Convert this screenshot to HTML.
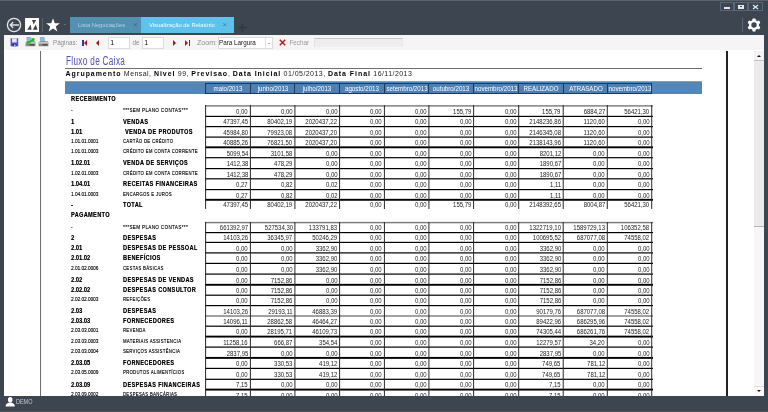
<!DOCTYPE html>
<html><head><meta charset="utf-8"><style>
*{margin:0;padding:0;box-sizing:border-box}
html,body{width:768px;height:412px;overflow:hidden}
body{position:relative;background:#3d4551;font-family:"Liberation Sans",sans-serif}
.a{position:absolute}
.t{position:absolute;line-height:0;white-space:nowrap;color:#1a1a1a}
.b{font-weight:bold;color:#000;text-shadow:0.25px 0 0 rgba(0,0,0,0.6)}
.s{color:#000;text-shadow:0.25px 0 0 rgba(0,0,0,0.6)}
.n{color:#222}
.ag{letter-spacing:0.45px;color:#151515}
.ag b{letter-spacing:0.95px;color:#000}
.hl{position:absolute;left:205px;width:448px;height:1px;background:#111}
.hl0{position:absolute;left:205px;width:448px;height:1px;background:#8a8a8a}
.vl{position:absolute;width:1px;background:#2a2a2a}
.hd{position:absolute;top:83px;height:11px;border:1px solid #203a55;background:#4e80b3}
</style></head><body>
<div id="w" style="position:absolute;left:0;top:0;width:768px;height:412px;overflow:hidden;will-change:transform;background:#3d4551">

<div class="a" style="left:0;top:0;width:768px;height:1px;background:#5d6168"></div>
<div class="a" style="left:4px;top:35px;width:760px;height:15px;background:#f5f5f5"></div>
<div class="a" style="left:4px;top:50px;width:760px;height:346px;background:#fff"></div>
<div class="a" style="left:40px;top:51px;width:1px;height:345px;background:#6e6e6e"></div>
<div class="a" style="left:726px;top:51px;width:2px;height:345px;background:#222"></div>
<div class="a" style="left:754px;top:51px;width:10px;height:345px;background:#f7f7f7"></div>
<div class="a" style="left:754px;top:61px;width:10px;height:166px;background:#ebebeb;border-bottom:1px solid #b4b4b4"></div>
<div class="t " style="top:60.94px;font-size:12px;color:#4d4dbb;left:66.20px;transform:scaleX(0.68);transform-origin:0 0;letter-spacing:0.5px;">Fluxo de Caixa</div>
<div class="a" style="left:65px;top:68px;width:637px;height:1px;background:#6f6f6f"></div>
<div class="t ag" style="top:74.17px;font-size:7px;color:#222;left:65.50px;"><b>Agrupamento</b> Mensal, <b>Nivel</b> 99, <b>Previsao</b>, <b>Data Inicial</b> 01/05/2013, <b>Data Final</b> 16/11/2013</div>
<div class="a" style="left:65px;top:81px;width:637px;height:1px;background:#9a9a9a"></div>
<div class="a" style="left:65px;top:82px;width:637px;height:12px;background:#5187b9"></div>
<div class="hd" style="left:205px;width:46px;overflow:hidden"><div class="t" style="left:22.00px;top:4.75px;font-size:6.5px;color:#fff;transform:translateX(-50%) scaleX(0.95)">maio/2013</div></div>
<div class="hd" style="left:250px;width:45px;overflow:hidden"><div class="t" style="left:21.50px;top:4.75px;font-size:6.5px;color:#fff;transform:translateX(-50%) scaleX(0.95)">junho/2013</div></div>
<div class="hd" style="left:294px;width:46px;overflow:hidden"><div class="t" style="left:22.00px;top:4.75px;font-size:6.5px;color:#fff;transform:translateX(-50%) scaleX(0.95)">julho/2013</div></div>
<div class="hd" style="left:339px;width:46px;overflow:hidden"><div class="t" style="left:22.00px;top:4.75px;font-size:6.5px;color:#fff;transform:translateX(-50%) scaleX(0.95)">agosto/2013</div></div>
<div class="hd" style="left:384px;width:45px;overflow:hidden"><div class="t" style="left:21.50px;top:4.75px;font-size:6.5px;color:#fff;transform:translateX(-50%) scaleX(0.95)">setembro/2013</div></div>
<div class="hd" style="left:428px;width:46px;overflow:hidden"><div class="t" style="left:22.00px;top:4.75px;font-size:6.5px;color:#fff;transform:translateX(-50%) scaleX(0.95)">outubro/2013</div></div>
<div class="hd" style="left:473px;width:46px;overflow:hidden"><div class="t" style="left:22.00px;top:4.75px;font-size:6.5px;color:#fff;transform:translateX(-50%) scaleX(0.95)">novembro/2013</div></div>
<div class="hd" style="left:518px;width:46px;overflow:hidden"><div class="t" style="left:22.00px;top:4.75px;font-size:6.5px;color:#fff;transform:translateX(-50%) scaleX(0.95)">REALIZADO</div></div>
<div class="hd" style="left:563px;width:45px;overflow:hidden"><div class="t" style="left:21.50px;top:4.75px;font-size:6.5px;color:#fff;transform:translateX(-50%) scaleX(0.95)">ATRASADO</div></div>
<div class="hd" style="left:607px;width:45px;overflow:hidden"><div class="t" style="left:21.50px;top:4.75px;font-size:6.5px;color:#fff;transform:translateX(-50%) scaleX(0.95)">novembro/2013</div></div>
<div class="t b" style="top:98.61px;font-size:6.9px;left:71.00px;transform:scaleX(0.8);transform-origin:0 0;letter-spacing:0.5px;">RECEBIMENTO</div>
<div class="a" style="left:205px;top:105px;width:448px;height:1px;background:rgba(120,120,120,0.80)"></div>
<div class="a" style="left:205px;top:106px;width:448px;height:1px;background:rgba(120,120,120,0.60)"></div>
<div class="a" style="left:205px;top:115px;width:448px;height:1px;background:rgba(0,0,0,0.20)"></div>
<div class="a" style="left:205px;top:116px;width:448px;height:1px;background:rgba(0,0,0,1.00)"></div>
<div class="a" style="left:205px;top:126px;width:448px;height:1px;background:rgba(0,0,0,1.00)"></div>
<div class="a" style="left:205px;top:127px;width:448px;height:1px;background:rgba(0,0,0,0.20)"></div>
<div class="a" style="left:205px;top:136px;width:448px;height:1px;background:rgba(0,0,0,0.50)"></div>
<div class="a" style="left:205px;top:137px;width:448px;height:1px;background:rgba(0,0,0,0.70)"></div>
<div class="a" style="left:205px;top:146px;width:448px;height:1px;background:rgba(0,0,0,0.65)"></div>
<div class="a" style="left:205px;top:147px;width:448px;height:1px;background:rgba(0,0,0,1.00)"></div>
<div class="a" style="left:205px;top:148px;width:448px;height:1px;background:rgba(0,0,0,0.25)"></div>
<div class="a" style="left:205px;top:157px;width:448px;height:1px;background:rgba(0,0,0,0.90)"></div>
<div class="a" style="left:205px;top:158px;width:448px;height:1px;background:rgba(0,0,0,0.30)"></div>
<div class="a" style="left:205px;top:168px;width:448px;height:1px;background:rgba(0,0,0,1.00)"></div>
<div class="a" style="left:205px;top:169px;width:448px;height:1px;background:rgba(0,0,0,0.20)"></div>
<div class="a" style="left:205px;top:178px;width:448px;height:1px;background:rgba(0,0,0,0.80)"></div>
<div class="a" style="left:205px;top:179px;width:448px;height:1px;background:rgba(0,0,0,0.40)"></div>
<div class="a" style="left:205px;top:189px;width:448px;height:1px;background:rgba(0,0,0,1.00)"></div>
<div class="a" style="left:205px;top:190px;width:448px;height:1px;background:rgba(0,0,0,0.20)"></div>
<div class="a" style="left:205px;top:198px;width:448px;height:1px;background:rgba(0,0,0,0.15)"></div>
<div class="a" style="left:205px;top:199px;width:448px;height:1px;background:rgba(0,0,0,1.00)"></div>
<div class="a" style="left:205px;top:200px;width:448px;height:1px;background:rgba(0,0,0,0.75)"></div>
<div class="a" style="left:205px;top:105px;width:1px;height:104px;background:rgba(40,40,40,0.90)"></div>
<div class="a" style="left:206px;top:105px;width:1px;height:104px;background:rgba(40,40,40,0.10)"></div>
<div class="a" style="left:249px;top:105px;width:1px;height:104px;background:rgba(40,40,40,0.10)"></div>
<div class="a" style="left:250px;top:105px;width:1px;height:104px;background:rgba(40,40,40,0.90)"></div>
<div class="a" style="left:294px;top:105px;width:1px;height:104px;background:rgba(40,40,40,0.60)"></div>
<div class="a" style="left:295px;top:105px;width:1px;height:104px;background:rgba(40,40,40,0.40)"></div>
<div class="a" style="left:339px;top:105px;width:1px;height:104px;background:rgba(40,40,40,0.90)"></div>
<div class="a" style="left:340px;top:105px;width:1px;height:104px;background:rgba(40,40,40,0.10)"></div>
<div class="a" style="left:383px;top:105px;width:1px;height:104px;background:rgba(40,40,40,0.10)"></div>
<div class="a" style="left:384px;top:105px;width:1px;height:104px;background:rgba(40,40,40,0.90)"></div>
<div class="a" style="left:428px;top:105px;width:1px;height:104px;background:rgba(40,40,40,0.60)"></div>
<div class="a" style="left:429px;top:105px;width:1px;height:104px;background:rgba(40,40,40,0.40)"></div>
<div class="a" style="left:473px;top:105px;width:1px;height:104px;background:rgba(40,40,40,0.90)"></div>
<div class="a" style="left:474px;top:105px;width:1px;height:104px;background:rgba(40,40,40,0.10)"></div>
<div class="a" style="left:518px;top:105px;width:1px;height:104px;background:rgba(40,40,40,0.80)"></div>
<div class="a" style="left:519px;top:105px;width:1px;height:104px;background:rgba(40,40,40,0.20)"></div>
<div class="a" style="left:562px;top:105px;width:1px;height:104px;background:rgba(40,40,40,0.30)"></div>
<div class="a" style="left:563px;top:105px;width:1px;height:104px;background:rgba(40,40,40,0.70)"></div>
<div class="a" style="left:606px;top:105px;width:1px;height:104px;background:rgba(40,40,40,0.20)"></div>
<div class="a" style="left:607px;top:105px;width:1px;height:104px;background:rgba(40,40,40,0.80)"></div>
<div class="a" style="left:651px;top:105px;width:1px;height:104px;background:rgba(40,40,40,0.80)"></div>
<div class="a" style="left:652px;top:105px;width:1px;height:104px;background:rgba(40,40,40,0.20)"></div>
<div class="t s" style="top:109.92px;font-size:6.0px;left:71.00px;transform:scaleX(0.78);transform-origin:0 0;">-</div>
<div class="t s" style="top:109.99px;font-size:5.8px;left:123.10px;transform:scaleX(0.7776000000000001);transform-origin:0 0;letter-spacing:0.5px;">***SEM PLANO CONTAS***</div>
<div class="t n" style="top:111.57px;font-size:7.0px;right:519.90px;transform:scaleX(0.855);transform-origin:100% 0;">0,00</div>
<div class="t n" style="top:111.57px;font-size:7.0px;right:475.40px;transform:scaleX(0.855);transform-origin:100% 0;">0,00</div>
<div class="t n" style="top:111.57px;font-size:7.0px;right:430.70px;transform:scaleX(0.855);transform-origin:100% 0;">0,00</div>
<div class="t n" style="top:111.57px;font-size:7.0px;right:385.90px;transform:scaleX(0.855);transform-origin:100% 0;">0,00</div>
<div class="t n" style="top:111.57px;font-size:7.0px;right:341.40px;transform:scaleX(0.855);transform-origin:100% 0;">0,00</div>
<div class="t n" style="top:111.57px;font-size:7.0px;right:296.70px;transform:scaleX(0.855);transform-origin:100% 0;">155,79</div>
<div class="t n" style="top:111.57px;font-size:7.0px;right:251.60px;transform:scaleX(0.855);transform-origin:100% 0;">0,00</div>
<div class="t n" style="top:111.57px;font-size:7.0px;right:207.10px;transform:scaleX(0.855);transform-origin:100% 0;">155,79</div>
<div class="t n" style="top:111.57px;font-size:7.0px;right:163.00px;transform:scaleX(0.855);transform-origin:100% 0;">6884,27</div>
<div class="t n" style="top:111.57px;font-size:7.0px;right:118.60px;transform:scaleX(0.855);transform-origin:100% 0;">56421,30</div>
<div class="t b" style="top:121.61px;font-size:6.9px;left:71.00px;transform:scaleX(0.83);transform-origin:0 0;">1</div>
<div class="t b" style="top:121.61px;font-size:6.9px;left:123.10px;transform:scaleX(0.8);transform-origin:0 0;letter-spacing:0.5px;">VENDAS</div>
<div class="t n" style="top:121.57px;font-size:7.0px;right:519.90px;transform:scaleX(0.855);transform-origin:100% 0;">47397,45</div>
<div class="t n" style="top:121.57px;font-size:7.0px;right:475.40px;transform:scaleX(0.855);transform-origin:100% 0;">80402,19</div>
<div class="t n" style="top:121.57px;font-size:7.0px;right:430.70px;transform:scaleX(0.855);transform-origin:100% 0;">2020437,22</div>
<div class="t n" style="top:121.57px;font-size:7.0px;right:385.90px;transform:scaleX(0.855);transform-origin:100% 0;">0,00</div>
<div class="t n" style="top:121.57px;font-size:7.0px;right:341.40px;transform:scaleX(0.855);transform-origin:100% 0;">0,00</div>
<div class="t n" style="top:121.57px;font-size:7.0px;right:296.70px;transform:scaleX(0.855);transform-origin:100% 0;">0,00</div>
<div class="t n" style="top:121.57px;font-size:7.0px;right:251.60px;transform:scaleX(0.855);transform-origin:100% 0;">0,00</div>
<div class="t n" style="top:121.57px;font-size:7.0px;right:207.10px;transform:scaleX(0.855);transform-origin:100% 0;">2148236,86</div>
<div class="t n" style="top:121.57px;font-size:7.0px;right:163.00px;transform:scaleX(0.855);transform-origin:100% 0;">1120,60</div>
<div class="t n" style="top:121.57px;font-size:7.0px;right:118.60px;transform:scaleX(0.855);transform-origin:100% 0;">0,00</div>
<div class="t b" style="top:131.61px;font-size:6.9px;left:71.00px;transform:scaleX(0.83);transform-origin:0 0;">1.01</div>
<div class="t b" style="top:131.61px;font-size:6.9px;left:124.80px;transform:scaleX(0.8);transform-origin:0 0;letter-spacing:0.5px;">VENDA DE PRODUTOS</div>
<div class="t n" style="top:132.57px;font-size:7.0px;right:519.90px;transform:scaleX(0.855);transform-origin:100% 0;">45984,80</div>
<div class="t n" style="top:132.57px;font-size:7.0px;right:475.40px;transform:scaleX(0.855);transform-origin:100% 0;">79923,08</div>
<div class="t n" style="top:132.57px;font-size:7.0px;right:430.70px;transform:scaleX(0.855);transform-origin:100% 0;">2020437,20</div>
<div class="t n" style="top:132.57px;font-size:7.0px;right:385.90px;transform:scaleX(0.855);transform-origin:100% 0;">0,00</div>
<div class="t n" style="top:132.57px;font-size:7.0px;right:341.40px;transform:scaleX(0.855);transform-origin:100% 0;">0,00</div>
<div class="t n" style="top:132.57px;font-size:7.0px;right:296.70px;transform:scaleX(0.855);transform-origin:100% 0;">0,00</div>
<div class="t n" style="top:132.57px;font-size:7.0px;right:251.60px;transform:scaleX(0.855);transform-origin:100% 0;">0,00</div>
<div class="t n" style="top:132.57px;font-size:7.0px;right:207.10px;transform:scaleX(0.855);transform-origin:100% 0;">2146345,08</div>
<div class="t n" style="top:132.57px;font-size:7.0px;right:163.00px;transform:scaleX(0.855);transform-origin:100% 0;">1120,60</div>
<div class="t n" style="top:132.57px;font-size:7.0px;right:118.60px;transform:scaleX(0.855);transform-origin:100% 0;">0,00</div>
<div class="t s" style="top:140.92px;font-size:6.0px;left:71.00px;transform:scaleX(0.78);transform-origin:0 0;">1.01.01.0001</div>
<div class="t s" style="top:140.99px;font-size:5.8px;left:123.10px;transform:scaleX(0.72);transform-origin:0 0;letter-spacing:0.5px;">CARTÃO DE CRÉDITO</div>
<div class="t n" style="top:142.57px;font-size:7.0px;right:519.90px;transform:scaleX(0.855);transform-origin:100% 0;">40885,26</div>
<div class="t n" style="top:142.57px;font-size:7.0px;right:475.40px;transform:scaleX(0.855);transform-origin:100% 0;">76821,50</div>
<div class="t n" style="top:142.57px;font-size:7.0px;right:430.70px;transform:scaleX(0.855);transform-origin:100% 0;">2020437,20</div>
<div class="t n" style="top:142.57px;font-size:7.0px;right:385.90px;transform:scaleX(0.855);transform-origin:100% 0;">0,00</div>
<div class="t n" style="top:142.57px;font-size:7.0px;right:341.40px;transform:scaleX(0.855);transform-origin:100% 0;">0,00</div>
<div class="t n" style="top:142.57px;font-size:7.0px;right:296.70px;transform:scaleX(0.855);transform-origin:100% 0;">0,00</div>
<div class="t n" style="top:142.57px;font-size:7.0px;right:251.60px;transform:scaleX(0.855);transform-origin:100% 0;">0,00</div>
<div class="t n" style="top:142.57px;font-size:7.0px;right:207.10px;transform:scaleX(0.855);transform-origin:100% 0;">2138143,96</div>
<div class="t n" style="top:142.57px;font-size:7.0px;right:163.00px;transform:scaleX(0.855);transform-origin:100% 0;">1120,60</div>
<div class="t n" style="top:142.57px;font-size:7.0px;right:118.60px;transform:scaleX(0.855);transform-origin:100% 0;">0,00</div>
<div class="t s" style="top:150.92px;font-size:6.0px;left:71.00px;transform:scaleX(0.78);transform-origin:0 0;">1.01.01.0003</div>
<div class="t s" style="top:150.99px;font-size:5.8px;left:123.10px;transform:scaleX(0.72);transform-origin:0 0;letter-spacing:0.5px;">CRÉDITO EM CONTA CORRENTE</div>
<div class="t n" style="top:153.57px;font-size:7.0px;right:519.90px;transform:scaleX(0.855);transform-origin:100% 0;">5099,54</div>
<div class="t n" style="top:153.57px;font-size:7.0px;right:475.40px;transform:scaleX(0.855);transform-origin:100% 0;">3101,58</div>
<div class="t n" style="top:153.57px;font-size:7.0px;right:430.70px;transform:scaleX(0.855);transform-origin:100% 0;">0,00</div>
<div class="t n" style="top:153.57px;font-size:7.0px;right:385.90px;transform:scaleX(0.855);transform-origin:100% 0;">0,00</div>
<div class="t n" style="top:153.57px;font-size:7.0px;right:341.40px;transform:scaleX(0.855);transform-origin:100% 0;">0,00</div>
<div class="t n" style="top:153.57px;font-size:7.0px;right:296.70px;transform:scaleX(0.855);transform-origin:100% 0;">0,00</div>
<div class="t n" style="top:153.57px;font-size:7.0px;right:251.60px;transform:scaleX(0.855);transform-origin:100% 0;">0,00</div>
<div class="t n" style="top:153.57px;font-size:7.0px;right:207.10px;transform:scaleX(0.855);transform-origin:100% 0;">8201,12</div>
<div class="t n" style="top:153.57px;font-size:7.0px;right:163.00px;transform:scaleX(0.855);transform-origin:100% 0;">0,00</div>
<div class="t n" style="top:153.57px;font-size:7.0px;right:118.60px;transform:scaleX(0.855);transform-origin:100% 0;">0,00</div>
<div class="t b" style="top:162.61px;font-size:6.9px;left:71.00px;transform:scaleX(0.83);transform-origin:0 0;">1.02.01</div>
<div class="t b" style="top:162.61px;font-size:6.9px;left:123.10px;transform:scaleX(0.8);transform-origin:0 0;letter-spacing:0.5px;">VENDA DE SERVIÇOS</div>
<div class="t n" style="top:163.57px;font-size:7.0px;right:519.90px;transform:scaleX(0.855);transform-origin:100% 0;">1412,38</div>
<div class="t n" style="top:163.57px;font-size:7.0px;right:475.40px;transform:scaleX(0.855);transform-origin:100% 0;">478,29</div>
<div class="t n" style="top:163.57px;font-size:7.0px;right:430.70px;transform:scaleX(0.855);transform-origin:100% 0;">0,00</div>
<div class="t n" style="top:163.57px;font-size:7.0px;right:385.90px;transform:scaleX(0.855);transform-origin:100% 0;">0,00</div>
<div class="t n" style="top:163.57px;font-size:7.0px;right:341.40px;transform:scaleX(0.855);transform-origin:100% 0;">0,00</div>
<div class="t n" style="top:163.57px;font-size:7.0px;right:296.70px;transform:scaleX(0.855);transform-origin:100% 0;">0,00</div>
<div class="t n" style="top:163.57px;font-size:7.0px;right:251.60px;transform:scaleX(0.855);transform-origin:100% 0;">0,00</div>
<div class="t n" style="top:163.57px;font-size:7.0px;right:207.10px;transform:scaleX(0.855);transform-origin:100% 0;">1890,67</div>
<div class="t n" style="top:163.57px;font-size:7.0px;right:163.00px;transform:scaleX(0.855);transform-origin:100% 0;">0,00</div>
<div class="t n" style="top:163.57px;font-size:7.0px;right:118.60px;transform:scaleX(0.855);transform-origin:100% 0;">0,00</div>
<div class="t s" style="top:172.92px;font-size:6.0px;left:71.00px;transform:scaleX(0.78);transform-origin:0 0;">1.02.01.0003</div>
<div class="t s" style="top:172.99px;font-size:5.8px;left:123.10px;transform:scaleX(0.72);transform-origin:0 0;letter-spacing:0.5px;">CRÉDITO EM CONTA CORRENTE</div>
<div class="t n" style="top:174.57px;font-size:7.0px;right:519.90px;transform:scaleX(0.855);transform-origin:100% 0;">1412,38</div>
<div class="t n" style="top:174.57px;font-size:7.0px;right:475.40px;transform:scaleX(0.855);transform-origin:100% 0;">478,29</div>
<div class="t n" style="top:174.57px;font-size:7.0px;right:430.70px;transform:scaleX(0.855);transform-origin:100% 0;">0,00</div>
<div class="t n" style="top:174.57px;font-size:7.0px;right:385.90px;transform:scaleX(0.855);transform-origin:100% 0;">0,00</div>
<div class="t n" style="top:174.57px;font-size:7.0px;right:341.40px;transform:scaleX(0.855);transform-origin:100% 0;">0,00</div>
<div class="t n" style="top:174.57px;font-size:7.0px;right:296.70px;transform:scaleX(0.855);transform-origin:100% 0;">0,00</div>
<div class="t n" style="top:174.57px;font-size:7.0px;right:251.60px;transform:scaleX(0.855);transform-origin:100% 0;">0,00</div>
<div class="t n" style="top:174.57px;font-size:7.0px;right:207.10px;transform:scaleX(0.855);transform-origin:100% 0;">1890,67</div>
<div class="t n" style="top:174.57px;font-size:7.0px;right:163.00px;transform:scaleX(0.855);transform-origin:100% 0;">0,00</div>
<div class="t n" style="top:174.57px;font-size:7.0px;right:118.60px;transform:scaleX(0.855);transform-origin:100% 0;">0,00</div>
<div class="t b" style="top:183.61px;font-size:6.9px;left:71.00px;transform:scaleX(0.83);transform-origin:0 0;">1.04.01</div>
<div class="t b" style="top:183.61px;font-size:6.9px;left:123.10px;transform:scaleX(0.8);transform-origin:0 0;letter-spacing:0.5px;">RECEITAS FINANCEIRAS</div>
<div class="t n" style="top:184.57px;font-size:7.0px;right:519.90px;transform:scaleX(0.855);transform-origin:100% 0;">0,27</div>
<div class="t n" style="top:184.57px;font-size:7.0px;right:475.40px;transform:scaleX(0.855);transform-origin:100% 0;">0,82</div>
<div class="t n" style="top:184.57px;font-size:7.0px;right:430.70px;transform:scaleX(0.855);transform-origin:100% 0;">0,02</div>
<div class="t n" style="top:184.57px;font-size:7.0px;right:385.90px;transform:scaleX(0.855);transform-origin:100% 0;">0,00</div>
<div class="t n" style="top:184.57px;font-size:7.0px;right:341.40px;transform:scaleX(0.855);transform-origin:100% 0;">0,00</div>
<div class="t n" style="top:184.57px;font-size:7.0px;right:296.70px;transform:scaleX(0.855);transform-origin:100% 0;">0,00</div>
<div class="t n" style="top:184.57px;font-size:7.0px;right:251.60px;transform:scaleX(0.855);transform-origin:100% 0;">0,00</div>
<div class="t n" style="top:184.57px;font-size:7.0px;right:207.10px;transform:scaleX(0.855);transform-origin:100% 0;">1,11</div>
<div class="t n" style="top:184.57px;font-size:7.0px;right:163.00px;transform:scaleX(0.855);transform-origin:100% 0;">0,00</div>
<div class="t n" style="top:184.57px;font-size:7.0px;right:118.60px;transform:scaleX(0.855);transform-origin:100% 0;">0,00</div>
<div class="t s" style="top:193.92px;font-size:6.0px;left:71.00px;transform:scaleX(0.78);transform-origin:0 0;">1.04.01.0003</div>
<div class="t s" style="top:193.99px;font-size:5.8px;left:123.10px;transform:scaleX(0.72);transform-origin:0 0;letter-spacing:0.5px;">ENCARGOS E JUROS</div>
<div class="t n" style="top:195.57px;font-size:7.0px;right:519.90px;transform:scaleX(0.855);transform-origin:100% 0;">0,27</div>
<div class="t n" style="top:195.57px;font-size:7.0px;right:475.40px;transform:scaleX(0.855);transform-origin:100% 0;">0,82</div>
<div class="t n" style="top:195.57px;font-size:7.0px;right:430.70px;transform:scaleX(0.855);transform-origin:100% 0;">0,02</div>
<div class="t n" style="top:195.57px;font-size:7.0px;right:385.90px;transform:scaleX(0.855);transform-origin:100% 0;">0,00</div>
<div class="t n" style="top:195.57px;font-size:7.0px;right:341.40px;transform:scaleX(0.855);transform-origin:100% 0;">0,00</div>
<div class="t n" style="top:195.57px;font-size:7.0px;right:296.70px;transform:scaleX(0.855);transform-origin:100% 0;">0,00</div>
<div class="t n" style="top:195.57px;font-size:7.0px;right:251.60px;transform:scaleX(0.855);transform-origin:100% 0;">0,00</div>
<div class="t n" style="top:195.57px;font-size:7.0px;right:207.10px;transform:scaleX(0.855);transform-origin:100% 0;">1,11</div>
<div class="t n" style="top:195.57px;font-size:7.0px;right:163.00px;transform:scaleX(0.855);transform-origin:100% 0;">0,00</div>
<div class="t n" style="top:195.57px;font-size:7.0px;right:118.60px;transform:scaleX(0.855);transform-origin:100% 0;">0,00</div>
<div class="t b" style="top:204.61px;font-size:6.9px;left:71.00px;transform:scaleX(0.83);transform-origin:0 0;">-</div>
<div class="t b" style="top:204.61px;font-size:6.9px;left:123.10px;transform:scaleX(0.8);transform-origin:0 0;letter-spacing:0.5px;">TOTAL</div>
<div class="t n" style="top:204.57px;font-size:7.0px;right:519.90px;transform:scaleX(0.855);transform-origin:100% 0;">47397,45</div>
<div class="t n" style="top:204.57px;font-size:7.0px;right:475.40px;transform:scaleX(0.855);transform-origin:100% 0;">80402,19</div>
<div class="t n" style="top:204.57px;font-size:7.0px;right:430.70px;transform:scaleX(0.855);transform-origin:100% 0;">2020437,22</div>
<div class="t n" style="top:204.57px;font-size:7.0px;right:385.90px;transform:scaleX(0.855);transform-origin:100% 0;">0,00</div>
<div class="t n" style="top:204.57px;font-size:7.0px;right:341.40px;transform:scaleX(0.855);transform-origin:100% 0;">0,00</div>
<div class="t n" style="top:204.57px;font-size:7.0px;right:296.70px;transform:scaleX(0.855);transform-origin:100% 0;">155,79</div>
<div class="t n" style="top:204.57px;font-size:7.0px;right:251.60px;transform:scaleX(0.855);transform-origin:100% 0;">0,00</div>
<div class="t n" style="top:204.57px;font-size:7.0px;right:207.10px;transform:scaleX(0.855);transform-origin:100% 0;">2148392,65</div>
<div class="t n" style="top:204.57px;font-size:7.0px;right:163.00px;transform:scaleX(0.855);transform-origin:100% 0;">8004,87</div>
<div class="t n" style="top:204.57px;font-size:7.0px;right:118.60px;transform:scaleX(0.855);transform-origin:100% 0;">56421,30</div>
<div class="t b" style="top:214.61px;font-size:6.9px;left:71.00px;transform:scaleX(0.8);transform-origin:0 0;letter-spacing:0.5px;">PAGAMENTO</div>
<div class="a" style="left:205px;top:221px;width:448px;height:1px;background:rgba(120,120,120,0.10)"></div>
<div class="a" style="left:205px;top:222px;width:448px;height:1px;background:rgba(120,120,120,1.00)"></div>
<div class="a" style="left:205px;top:223px;width:448px;height:1px;background:rgba(120,120,120,0.30)"></div>
<div class="a" style="left:205px;top:232px;width:448px;height:1px;background:rgba(0,0,0,1.00)"></div>
<div class="a" style="left:205px;top:233px;width:448px;height:1px;background:rgba(0,0,0,0.20)"></div>
<div class="a" style="left:205px;top:241px;width:448px;height:1px;background:rgba(0,0,0,0.20)"></div>
<div class="a" style="left:205px;top:242px;width:448px;height:1px;background:rgba(0,0,0,1.00)"></div>
<div class="a" style="left:205px;top:252px;width:448px;height:1px;background:rgba(0,0,0,0.70)"></div>
<div class="a" style="left:205px;top:253px;width:448px;height:1px;background:rgba(0,0,0,0.50)"></div>
<div class="a" style="left:205px;top:262px;width:448px;height:1px;background:rgba(0,0,0,0.20)"></div>
<div class="a" style="left:205px;top:263px;width:448px;height:1px;background:rgba(0,0,0,1.00)"></div>
<div class="a" style="left:205px;top:273px;width:448px;height:1px;background:rgba(0,0,0,0.50)"></div>
<div class="a" style="left:205px;top:274px;width:448px;height:1px;background:rgba(0,0,0,0.70)"></div>
<div class="a" style="left:205px;top:283px;width:448px;height:1px;background:rgba(0,0,0,0.15)"></div>
<div class="a" style="left:205px;top:284px;width:448px;height:1px;background:rgba(0,0,0,1.00)"></div>
<div class="a" style="left:205px;top:285px;width:448px;height:1px;background:rgba(0,0,0,0.75)"></div>
<div class="a" style="left:205px;top:294px;width:448px;height:1px;background:rgba(0,0,0,0.40)"></div>
<div class="a" style="left:205px;top:295px;width:448px;height:1px;background:rgba(0,0,0,0.80)"></div>
<div class="a" style="left:205px;top:305px;width:448px;height:1px;background:rgba(0,0,0,1.00)"></div>
<div class="a" style="left:205px;top:306px;width:448px;height:1px;background:rgba(0,0,0,0.20)"></div>
<div class="a" style="left:205px;top:315px;width:448px;height:1px;background:rgba(110,110,110,0.65)"></div>
<div class="a" style="left:205px;top:316px;width:448px;height:1px;background:rgba(110,110,110,0.65)"></div>
<div class="a" style="left:205px;top:325px;width:448px;height:1px;background:rgba(0,0,0,0.40)"></div>
<div class="a" style="left:205px;top:326px;width:448px;height:1px;background:rgba(0,0,0,0.80)"></div>
<div class="a" style="left:205px;top:335px;width:448px;height:1px;background:rgba(0,0,0,0.35)"></div>
<div class="a" style="left:205px;top:336px;width:448px;height:1px;background:rgba(0,0,0,1.00)"></div>
<div class="a" style="left:205px;top:337px;width:448px;height:1px;background:rgba(0,0,0,0.55)"></div>
<div class="a" style="left:205px;top:346px;width:448px;height:1px;background:rgba(0,0,0,0.50)"></div>
<div class="a" style="left:205px;top:347px;width:448px;height:1px;background:rgba(0,0,0,0.70)"></div>
<div class="a" style="left:205px;top:356px;width:448px;height:1px;background:rgba(0,0,0,0.05)"></div>
<div class="a" style="left:205px;top:357px;width:448px;height:1px;background:rgba(0,0,0,1.00)"></div>
<div class="a" style="left:205px;top:358px;width:448px;height:1px;background:rgba(0,0,0,0.85)"></div>
<div class="a" style="left:205px;top:367px;width:448px;height:1px;background:rgba(0,0,0,0.20)"></div>
<div class="a" style="left:205px;top:368px;width:448px;height:1px;background:rgba(0,0,0,1.00)"></div>
<div class="a" style="left:205px;top:378px;width:448px;height:1px;background:rgba(0,0,0,0.30)"></div>
<div class="a" style="left:205px;top:379px;width:448px;height:1px;background:rgba(0,0,0,0.90)"></div>
<div class="a" style="left:205px;top:388px;width:448px;height:1px;background:rgba(0,0,0,0.35)"></div>
<div class="a" style="left:205px;top:389px;width:448px;height:1px;background:rgba(0,0,0,1.00)"></div>
<div class="a" style="left:205px;top:390px;width:448px;height:1px;background:rgba(0,0,0,0.55)"></div>
<div class="a" style="left:205px;top:222px;width:1px;height:178px;background:rgba(40,40,40,0.90)"></div>
<div class="a" style="left:206px;top:222px;width:1px;height:178px;background:rgba(40,40,40,0.10)"></div>
<div class="a" style="left:249px;top:222px;width:1px;height:178px;background:rgba(40,40,40,0.10)"></div>
<div class="a" style="left:250px;top:222px;width:1px;height:178px;background:rgba(40,40,40,0.90)"></div>
<div class="a" style="left:294px;top:222px;width:1px;height:178px;background:rgba(40,40,40,0.60)"></div>
<div class="a" style="left:295px;top:222px;width:1px;height:178px;background:rgba(40,40,40,0.40)"></div>
<div class="a" style="left:339px;top:222px;width:1px;height:178px;background:rgba(40,40,40,0.90)"></div>
<div class="a" style="left:340px;top:222px;width:1px;height:178px;background:rgba(40,40,40,0.10)"></div>
<div class="a" style="left:383px;top:222px;width:1px;height:178px;background:rgba(40,40,40,0.10)"></div>
<div class="a" style="left:384px;top:222px;width:1px;height:178px;background:rgba(40,40,40,0.90)"></div>
<div class="a" style="left:428px;top:222px;width:1px;height:178px;background:rgba(40,40,40,0.60)"></div>
<div class="a" style="left:429px;top:222px;width:1px;height:178px;background:rgba(40,40,40,0.40)"></div>
<div class="a" style="left:473px;top:222px;width:1px;height:178px;background:rgba(40,40,40,0.90)"></div>
<div class="a" style="left:474px;top:222px;width:1px;height:178px;background:rgba(40,40,40,0.10)"></div>
<div class="a" style="left:518px;top:222px;width:1px;height:178px;background:rgba(40,40,40,0.80)"></div>
<div class="a" style="left:519px;top:222px;width:1px;height:178px;background:rgba(40,40,40,0.20)"></div>
<div class="a" style="left:562px;top:222px;width:1px;height:178px;background:rgba(40,40,40,0.30)"></div>
<div class="a" style="left:563px;top:222px;width:1px;height:178px;background:rgba(40,40,40,0.70)"></div>
<div class="a" style="left:606px;top:222px;width:1px;height:178px;background:rgba(40,40,40,0.20)"></div>
<div class="a" style="left:607px;top:222px;width:1px;height:178px;background:rgba(40,40,40,0.80)"></div>
<div class="a" style="left:651px;top:222px;width:1px;height:178px;background:rgba(40,40,40,0.80)"></div>
<div class="a" style="left:652px;top:222px;width:1px;height:178px;background:rgba(40,40,40,0.20)"></div>
<div class="t s" style="top:226.92px;font-size:6.0px;left:71.00px;transform:scaleX(0.78);transform-origin:0 0;">-</div>
<div class="t s" style="top:226.99px;font-size:5.8px;left:123.10px;transform:scaleX(0.7776000000000001);transform-origin:0 0;letter-spacing:0.5px;">***SEM PLANO CONTAS***</div>
<div class="t n" style="top:227.57px;font-size:7.0px;right:519.90px;transform:scaleX(0.855);transform-origin:100% 0;">661392,97</div>
<div class="t n" style="top:227.57px;font-size:7.0px;right:475.40px;transform:scaleX(0.855);transform-origin:100% 0;">527534,30</div>
<div class="t n" style="top:227.57px;font-size:7.0px;right:430.70px;transform:scaleX(0.855);transform-origin:100% 0;">133791,83</div>
<div class="t n" style="top:227.57px;font-size:7.0px;right:385.90px;transform:scaleX(0.855);transform-origin:100% 0;">0,00</div>
<div class="t n" style="top:227.57px;font-size:7.0px;right:341.40px;transform:scaleX(0.855);transform-origin:100% 0;">0,00</div>
<div class="t n" style="top:227.57px;font-size:7.0px;right:296.70px;transform:scaleX(0.855);transform-origin:100% 0;">0,00</div>
<div class="t n" style="top:227.57px;font-size:7.0px;right:251.60px;transform:scaleX(0.855);transform-origin:100% 0;">0,00</div>
<div class="t n" style="top:227.57px;font-size:7.0px;right:207.10px;transform:scaleX(0.855);transform-origin:100% 0;">1322719,10</div>
<div class="t n" style="top:227.57px;font-size:7.0px;right:163.00px;transform:scaleX(0.855);transform-origin:100% 0;">1589729,13</div>
<div class="t n" style="top:227.57px;font-size:7.0px;right:118.60px;transform:scaleX(0.855);transform-origin:100% 0;">106352,58</div>
<div class="t b" style="top:237.61px;font-size:6.9px;left:71.00px;transform:scaleX(0.83);transform-origin:0 0;">2</div>
<div class="t b" style="top:237.61px;font-size:6.9px;left:123.10px;transform:scaleX(0.8);transform-origin:0 0;letter-spacing:0.5px;">DESPESAS</div>
<div class="t n" style="top:237.57px;font-size:7.0px;right:519.90px;transform:scaleX(0.855);transform-origin:100% 0;">14103,26</div>
<div class="t n" style="top:237.57px;font-size:7.0px;right:475.40px;transform:scaleX(0.855);transform-origin:100% 0;">36345,97</div>
<div class="t n" style="top:237.57px;font-size:7.0px;right:430.70px;transform:scaleX(0.855);transform-origin:100% 0;">50246,29</div>
<div class="t n" style="top:237.57px;font-size:7.0px;right:385.90px;transform:scaleX(0.855);transform-origin:100% 0;">0,00</div>
<div class="t n" style="top:237.57px;font-size:7.0px;right:341.40px;transform:scaleX(0.855);transform-origin:100% 0;">0,00</div>
<div class="t n" style="top:237.57px;font-size:7.0px;right:296.70px;transform:scaleX(0.855);transform-origin:100% 0;">0,00</div>
<div class="t n" style="top:237.57px;font-size:7.0px;right:251.60px;transform:scaleX(0.855);transform-origin:100% 0;">0,00</div>
<div class="t n" style="top:237.57px;font-size:7.0px;right:207.10px;transform:scaleX(0.855);transform-origin:100% 0;">100695,52</div>
<div class="t n" style="top:237.57px;font-size:7.0px;right:163.00px;transform:scaleX(0.855);transform-origin:100% 0;">687077,08</div>
<div class="t n" style="top:237.57px;font-size:7.0px;right:118.60px;transform:scaleX(0.855);transform-origin:100% 0;">74558,02</div>
<div class="t b" style="top:247.61px;font-size:6.9px;left:71.00px;transform:scaleX(0.83);transform-origin:0 0;">2.01</div>
<div class="t b" style="top:247.61px;font-size:6.9px;left:123.10px;transform:scaleX(0.8);transform-origin:0 0;letter-spacing:0.5px;">DESPESAS DE PESSOAL</div>
<div class="t n" style="top:248.57px;font-size:7.0px;right:519.90px;transform:scaleX(0.855);transform-origin:100% 0;">0,00</div>
<div class="t n" style="top:248.57px;font-size:7.0px;right:475.40px;transform:scaleX(0.855);transform-origin:100% 0;">0,00</div>
<div class="t n" style="top:248.57px;font-size:7.0px;right:430.70px;transform:scaleX(0.855);transform-origin:100% 0;">3362,90</div>
<div class="t n" style="top:248.57px;font-size:7.0px;right:385.90px;transform:scaleX(0.855);transform-origin:100% 0;">0,00</div>
<div class="t n" style="top:248.57px;font-size:7.0px;right:341.40px;transform:scaleX(0.855);transform-origin:100% 0;">0,00</div>
<div class="t n" style="top:248.57px;font-size:7.0px;right:296.70px;transform:scaleX(0.855);transform-origin:100% 0;">0,00</div>
<div class="t n" style="top:248.57px;font-size:7.0px;right:251.60px;transform:scaleX(0.855);transform-origin:100% 0;">0,00</div>
<div class="t n" style="top:248.57px;font-size:7.0px;right:207.10px;transform:scaleX(0.855);transform-origin:100% 0;">3362,90</div>
<div class="t n" style="top:248.57px;font-size:7.0px;right:163.00px;transform:scaleX(0.855);transform-origin:100% 0;">0,00</div>
<div class="t n" style="top:248.57px;font-size:7.0px;right:118.60px;transform:scaleX(0.855);transform-origin:100% 0;">0,00</div>
<div class="t b" style="top:257.61px;font-size:6.9px;left:71.00px;transform:scaleX(0.83);transform-origin:0 0;">2.01.02</div>
<div class="t b" style="top:257.61px;font-size:6.9px;left:123.10px;transform:scaleX(0.8);transform-origin:0 0;letter-spacing:0.5px;">BENEFÍCIOS</div>
<div class="t n" style="top:258.57px;font-size:7.0px;right:519.90px;transform:scaleX(0.855);transform-origin:100% 0;">0,00</div>
<div class="t n" style="top:258.57px;font-size:7.0px;right:475.40px;transform:scaleX(0.855);transform-origin:100% 0;">0,00</div>
<div class="t n" style="top:258.57px;font-size:7.0px;right:430.70px;transform:scaleX(0.855);transform-origin:100% 0;">3362,90</div>
<div class="t n" style="top:258.57px;font-size:7.0px;right:385.90px;transform:scaleX(0.855);transform-origin:100% 0;">0,00</div>
<div class="t n" style="top:258.57px;font-size:7.0px;right:341.40px;transform:scaleX(0.855);transform-origin:100% 0;">0,00</div>
<div class="t n" style="top:258.57px;font-size:7.0px;right:296.70px;transform:scaleX(0.855);transform-origin:100% 0;">0,00</div>
<div class="t n" style="top:258.57px;font-size:7.0px;right:251.60px;transform:scaleX(0.855);transform-origin:100% 0;">0,00</div>
<div class="t n" style="top:258.57px;font-size:7.0px;right:207.10px;transform:scaleX(0.855);transform-origin:100% 0;">3362,90</div>
<div class="t n" style="top:258.57px;font-size:7.0px;right:163.00px;transform:scaleX(0.855);transform-origin:100% 0;">0,00</div>
<div class="t n" style="top:258.57px;font-size:7.0px;right:118.60px;transform:scaleX(0.855);transform-origin:100% 0;">0,00</div>
<div class="t s" style="top:267.92px;font-size:6.0px;left:71.00px;transform:scaleX(0.78);transform-origin:0 0;">2.01.02.0006</div>
<div class="t s" style="top:267.99px;font-size:5.8px;left:123.10px;transform:scaleX(0.72);transform-origin:0 0;letter-spacing:0.5px;">CESTAS BÁSICAS</div>
<div class="t n" style="top:269.57px;font-size:7.0px;right:519.90px;transform:scaleX(0.855);transform-origin:100% 0;">0,00</div>
<div class="t n" style="top:269.57px;font-size:7.0px;right:475.40px;transform:scaleX(0.855);transform-origin:100% 0;">0,00</div>
<div class="t n" style="top:269.57px;font-size:7.0px;right:430.70px;transform:scaleX(0.855);transform-origin:100% 0;">3362,90</div>
<div class="t n" style="top:269.57px;font-size:7.0px;right:385.90px;transform:scaleX(0.855);transform-origin:100% 0;">0,00</div>
<div class="t n" style="top:269.57px;font-size:7.0px;right:341.40px;transform:scaleX(0.855);transform-origin:100% 0;">0,00</div>
<div class="t n" style="top:269.57px;font-size:7.0px;right:296.70px;transform:scaleX(0.855);transform-origin:100% 0;">0,00</div>
<div class="t n" style="top:269.57px;font-size:7.0px;right:251.60px;transform:scaleX(0.855);transform-origin:100% 0;">0,00</div>
<div class="t n" style="top:269.57px;font-size:7.0px;right:207.10px;transform:scaleX(0.855);transform-origin:100% 0;">3362,90</div>
<div class="t n" style="top:269.57px;font-size:7.0px;right:163.00px;transform:scaleX(0.855);transform-origin:100% 0;">0,00</div>
<div class="t n" style="top:269.57px;font-size:7.0px;right:118.60px;transform:scaleX(0.855);transform-origin:100% 0;">0,00</div>
<div class="t b" style="top:279.61px;font-size:6.9px;left:71.00px;transform:scaleX(0.83);transform-origin:0 0;">2.02</div>
<div class="t b" style="top:279.61px;font-size:6.9px;left:123.10px;transform:scaleX(0.8);transform-origin:0 0;letter-spacing:0.5px;">DESPESAS DE VENDAS</div>
<div class="t n" style="top:280.57px;font-size:7.0px;right:519.90px;transform:scaleX(0.855);transform-origin:100% 0;">0,00</div>
<div class="t n" style="top:280.57px;font-size:7.0px;right:475.40px;transform:scaleX(0.855);transform-origin:100% 0;">7152,86</div>
<div class="t n" style="top:280.57px;font-size:7.0px;right:430.70px;transform:scaleX(0.855);transform-origin:100% 0;">0,00</div>
<div class="t n" style="top:280.57px;font-size:7.0px;right:385.90px;transform:scaleX(0.855);transform-origin:100% 0;">0,00</div>
<div class="t n" style="top:280.57px;font-size:7.0px;right:341.40px;transform:scaleX(0.855);transform-origin:100% 0;">0,00</div>
<div class="t n" style="top:280.57px;font-size:7.0px;right:296.70px;transform:scaleX(0.855);transform-origin:100% 0;">0,00</div>
<div class="t n" style="top:280.57px;font-size:7.0px;right:251.60px;transform:scaleX(0.855);transform-origin:100% 0;">0,00</div>
<div class="t n" style="top:280.57px;font-size:7.0px;right:207.10px;transform:scaleX(0.855);transform-origin:100% 0;">7152,86</div>
<div class="t n" style="top:280.57px;font-size:7.0px;right:163.00px;transform:scaleX(0.855);transform-origin:100% 0;">0,00</div>
<div class="t n" style="top:280.57px;font-size:7.0px;right:118.60px;transform:scaleX(0.855);transform-origin:100% 0;">0,00</div>
<div class="t b" style="top:289.61px;font-size:6.9px;left:71.00px;transform:scaleX(0.83);transform-origin:0 0;">2.02.02</div>
<div class="t b" style="top:289.61px;font-size:6.9px;left:123.10px;transform:scaleX(0.8);transform-origin:0 0;letter-spacing:0.5px;">DESPESAS CONSULTOR</div>
<div class="t n" style="top:290.57px;font-size:7.0px;right:519.90px;transform:scaleX(0.855);transform-origin:100% 0;">0,00</div>
<div class="t n" style="top:290.57px;font-size:7.0px;right:475.40px;transform:scaleX(0.855);transform-origin:100% 0;">7152,86</div>
<div class="t n" style="top:290.57px;font-size:7.0px;right:430.70px;transform:scaleX(0.855);transform-origin:100% 0;">0,00</div>
<div class="t n" style="top:290.57px;font-size:7.0px;right:385.90px;transform:scaleX(0.855);transform-origin:100% 0;">0,00</div>
<div class="t n" style="top:290.57px;font-size:7.0px;right:341.40px;transform:scaleX(0.855);transform-origin:100% 0;">0,00</div>
<div class="t n" style="top:290.57px;font-size:7.0px;right:296.70px;transform:scaleX(0.855);transform-origin:100% 0;">0,00</div>
<div class="t n" style="top:290.57px;font-size:7.0px;right:251.60px;transform:scaleX(0.855);transform-origin:100% 0;">0,00</div>
<div class="t n" style="top:290.57px;font-size:7.0px;right:207.10px;transform:scaleX(0.855);transform-origin:100% 0;">7152,86</div>
<div class="t n" style="top:290.57px;font-size:7.0px;right:163.00px;transform:scaleX(0.855);transform-origin:100% 0;">0,00</div>
<div class="t n" style="top:290.57px;font-size:7.0px;right:118.60px;transform:scaleX(0.855);transform-origin:100% 0;">0,00</div>
<div class="t s" style="top:298.92px;font-size:6.0px;left:71.00px;transform:scaleX(0.78);transform-origin:0 0;">2.02.02.0003</div>
<div class="t s" style="top:298.99px;font-size:5.8px;left:123.10px;transform:scaleX(0.72);transform-origin:0 0;letter-spacing:0.5px;">REFEIÇÕES</div>
<div class="t n" style="top:300.57px;font-size:7.0px;right:519.90px;transform:scaleX(0.855);transform-origin:100% 0;">0,00</div>
<div class="t n" style="top:300.57px;font-size:7.0px;right:475.40px;transform:scaleX(0.855);transform-origin:100% 0;">7152,86</div>
<div class="t n" style="top:300.57px;font-size:7.0px;right:430.70px;transform:scaleX(0.855);transform-origin:100% 0;">0,00</div>
<div class="t n" style="top:300.57px;font-size:7.0px;right:385.90px;transform:scaleX(0.855);transform-origin:100% 0;">0,00</div>
<div class="t n" style="top:300.57px;font-size:7.0px;right:341.40px;transform:scaleX(0.855);transform-origin:100% 0;">0,00</div>
<div class="t n" style="top:300.57px;font-size:7.0px;right:296.70px;transform:scaleX(0.855);transform-origin:100% 0;">0,00</div>
<div class="t n" style="top:300.57px;font-size:7.0px;right:251.60px;transform:scaleX(0.855);transform-origin:100% 0;">0,00</div>
<div class="t n" style="top:300.57px;font-size:7.0px;right:207.10px;transform:scaleX(0.855);transform-origin:100% 0;">7152,86</div>
<div class="t n" style="top:300.57px;font-size:7.0px;right:163.00px;transform:scaleX(0.855);transform-origin:100% 0;">0,00</div>
<div class="t n" style="top:300.57px;font-size:7.0px;right:118.60px;transform:scaleX(0.855);transform-origin:100% 0;">0,00</div>
<div class="t b" style="top:310.61px;font-size:6.9px;left:71.00px;transform:scaleX(0.83);transform-origin:0 0;">2.03</div>
<div class="t b" style="top:310.61px;font-size:6.9px;left:123.10px;transform:scaleX(0.8);transform-origin:0 0;letter-spacing:0.5px;">DESPESAS</div>
<div class="t n" style="top:311.57px;font-size:7.0px;right:519.90px;transform:scaleX(0.855);transform-origin:100% 0;">14103,26</div>
<div class="t n" style="top:311.57px;font-size:7.0px;right:475.40px;transform:scaleX(0.855);transform-origin:100% 0;">29193,11</div>
<div class="t n" style="top:311.57px;font-size:7.0px;right:430.70px;transform:scaleX(0.855);transform-origin:100% 0;">46883,39</div>
<div class="t n" style="top:311.57px;font-size:7.0px;right:385.90px;transform:scaleX(0.855);transform-origin:100% 0;">0,00</div>
<div class="t n" style="top:311.57px;font-size:7.0px;right:341.40px;transform:scaleX(0.855);transform-origin:100% 0;">0,00</div>
<div class="t n" style="top:311.57px;font-size:7.0px;right:296.70px;transform:scaleX(0.855);transform-origin:100% 0;">0,00</div>
<div class="t n" style="top:311.57px;font-size:7.0px;right:251.60px;transform:scaleX(0.855);transform-origin:100% 0;">0,00</div>
<div class="t n" style="top:311.57px;font-size:7.0px;right:207.10px;transform:scaleX(0.855);transform-origin:100% 0;">90179,76</div>
<div class="t n" style="top:311.57px;font-size:7.0px;right:163.00px;transform:scaleX(0.855);transform-origin:100% 0;">687077,08</div>
<div class="t n" style="top:311.57px;font-size:7.0px;right:118.60px;transform:scaleX(0.855);transform-origin:100% 0;">74558,02</div>
<div class="t b" style="top:320.61px;font-size:6.9px;left:71.00px;transform:scaleX(0.83);transform-origin:0 0;">2.03.03</div>
<div class="t b" style="top:320.61px;font-size:6.9px;left:123.10px;transform:scaleX(0.8);transform-origin:0 0;letter-spacing:0.5px;">FORNECEDORES</div>
<div class="t n" style="top:321.57px;font-size:7.0px;right:519.90px;transform:scaleX(0.855);transform-origin:100% 0;">14096,11</div>
<div class="t n" style="top:321.57px;font-size:7.0px;right:475.40px;transform:scaleX(0.855);transform-origin:100% 0;">28862,58</div>
<div class="t n" style="top:321.57px;font-size:7.0px;right:430.70px;transform:scaleX(0.855);transform-origin:100% 0;">46464,27</div>
<div class="t n" style="top:321.57px;font-size:7.0px;right:385.90px;transform:scaleX(0.855);transform-origin:100% 0;">0,00</div>
<div class="t n" style="top:321.57px;font-size:7.0px;right:341.40px;transform:scaleX(0.855);transform-origin:100% 0;">0,00</div>
<div class="t n" style="top:321.57px;font-size:7.0px;right:296.70px;transform:scaleX(0.855);transform-origin:100% 0;">0,00</div>
<div class="t n" style="top:321.57px;font-size:7.0px;right:251.60px;transform:scaleX(0.855);transform-origin:100% 0;">0,00</div>
<div class="t n" style="top:321.57px;font-size:7.0px;right:207.10px;transform:scaleX(0.855);transform-origin:100% 0;">89422,96</div>
<div class="t n" style="top:321.57px;font-size:7.0px;right:163.00px;transform:scaleX(0.855);transform-origin:100% 0;">686295,96</div>
<div class="t n" style="top:321.57px;font-size:7.0px;right:118.60px;transform:scaleX(0.855);transform-origin:100% 0;">74558,02</div>
<div class="t s" style="top:329.92px;font-size:6.0px;left:71.00px;transform:scaleX(0.78);transform-origin:0 0;">2.03.03.0001</div>
<div class="t s" style="top:329.99px;font-size:5.8px;left:123.10px;transform:scaleX(0.72);transform-origin:0 0;letter-spacing:0.5px;">REVENDA</div>
<div class="t n" style="top:331.57px;font-size:7.0px;right:519.90px;transform:scaleX(0.855);transform-origin:100% 0;">0,00</div>
<div class="t n" style="top:331.57px;font-size:7.0px;right:475.40px;transform:scaleX(0.855);transform-origin:100% 0;">28195,71</div>
<div class="t n" style="top:331.57px;font-size:7.0px;right:430.70px;transform:scaleX(0.855);transform-origin:100% 0;">46109,73</div>
<div class="t n" style="top:331.57px;font-size:7.0px;right:385.90px;transform:scaleX(0.855);transform-origin:100% 0;">0,00</div>
<div class="t n" style="top:331.57px;font-size:7.0px;right:341.40px;transform:scaleX(0.855);transform-origin:100% 0;">0,00</div>
<div class="t n" style="top:331.57px;font-size:7.0px;right:296.70px;transform:scaleX(0.855);transform-origin:100% 0;">0,00</div>
<div class="t n" style="top:331.57px;font-size:7.0px;right:251.60px;transform:scaleX(0.855);transform-origin:100% 0;">0,00</div>
<div class="t n" style="top:331.57px;font-size:7.0px;right:207.10px;transform:scaleX(0.855);transform-origin:100% 0;">74305,44</div>
<div class="t n" style="top:331.57px;font-size:7.0px;right:163.00px;transform:scaleX(0.855);transform-origin:100% 0;">686261,76</div>
<div class="t n" style="top:331.57px;font-size:7.0px;right:118.60px;transform:scaleX(0.855);transform-origin:100% 0;">74558,02</div>
<div class="t s" style="top:340.92px;font-size:6.0px;left:71.00px;transform:scaleX(0.78);transform-origin:0 0;">2.03.03.0003</div>
<div class="t s" style="top:340.99px;font-size:5.8px;left:123.10px;transform:scaleX(0.72);transform-origin:0 0;letter-spacing:0.5px;">MATERIAIS ASSISTENCIA</div>
<div class="t n" style="top:342.57px;font-size:7.0px;right:519.90px;transform:scaleX(0.855);transform-origin:100% 0;">11258,16</div>
<div class="t n" style="top:342.57px;font-size:7.0px;right:475.40px;transform:scaleX(0.855);transform-origin:100% 0;">666,87</div>
<div class="t n" style="top:342.57px;font-size:7.0px;right:430.70px;transform:scaleX(0.855);transform-origin:100% 0;">354,54</div>
<div class="t n" style="top:342.57px;font-size:7.0px;right:385.90px;transform:scaleX(0.855);transform-origin:100% 0;">0,00</div>
<div class="t n" style="top:342.57px;font-size:7.0px;right:341.40px;transform:scaleX(0.855);transform-origin:100% 0;">0,00</div>
<div class="t n" style="top:342.57px;font-size:7.0px;right:296.70px;transform:scaleX(0.855);transform-origin:100% 0;">0,00</div>
<div class="t n" style="top:342.57px;font-size:7.0px;right:251.60px;transform:scaleX(0.855);transform-origin:100% 0;">0,00</div>
<div class="t n" style="top:342.57px;font-size:7.0px;right:207.10px;transform:scaleX(0.855);transform-origin:100% 0;">12279,57</div>
<div class="t n" style="top:342.57px;font-size:7.0px;right:163.00px;transform:scaleX(0.855);transform-origin:100% 0;">34,20</div>
<div class="t n" style="top:342.57px;font-size:7.0px;right:118.60px;transform:scaleX(0.855);transform-origin:100% 0;">0,00</div>
<div class="t s" style="top:350.92px;font-size:6.0px;left:71.00px;transform:scaleX(0.78);transform-origin:0 0;">2.03.03.0004</div>
<div class="t s" style="top:350.99px;font-size:5.8px;left:123.10px;transform:scaleX(0.72);transform-origin:0 0;letter-spacing:0.5px;">SERVIÇOS ASSISTÊNCIA</div>
<div class="t n" style="top:353.57px;font-size:7.0px;right:519.90px;transform:scaleX(0.855);transform-origin:100% 0;">2837,95</div>
<div class="t n" style="top:353.57px;font-size:7.0px;right:475.40px;transform:scaleX(0.855);transform-origin:100% 0;">0,00</div>
<div class="t n" style="top:353.57px;font-size:7.0px;right:430.70px;transform:scaleX(0.855);transform-origin:100% 0;">0,00</div>
<div class="t n" style="top:353.57px;font-size:7.0px;right:385.90px;transform:scaleX(0.855);transform-origin:100% 0;">0,00</div>
<div class="t n" style="top:353.57px;font-size:7.0px;right:341.40px;transform:scaleX(0.855);transform-origin:100% 0;">0,00</div>
<div class="t n" style="top:353.57px;font-size:7.0px;right:296.70px;transform:scaleX(0.855);transform-origin:100% 0;">0,00</div>
<div class="t n" style="top:353.57px;font-size:7.0px;right:251.60px;transform:scaleX(0.855);transform-origin:100% 0;">0,00</div>
<div class="t n" style="top:353.57px;font-size:7.0px;right:207.10px;transform:scaleX(0.855);transform-origin:100% 0;">2837,95</div>
<div class="t n" style="top:353.57px;font-size:7.0px;right:163.00px;transform:scaleX(0.855);transform-origin:100% 0;">0,00</div>
<div class="t n" style="top:353.57px;font-size:7.0px;right:118.60px;transform:scaleX(0.855);transform-origin:100% 0;">0,00</div>
<div class="t b" style="top:362.61px;font-size:6.9px;left:71.00px;transform:scaleX(0.83);transform-origin:0 0;">2.03.05</div>
<div class="t b" style="top:362.61px;font-size:6.9px;left:123.10px;transform:scaleX(0.8);transform-origin:0 0;letter-spacing:0.5px;">FORNECEDORES</div>
<div class="t n" style="top:363.57px;font-size:7.0px;right:519.90px;transform:scaleX(0.855);transform-origin:100% 0;">0,00</div>
<div class="t n" style="top:363.57px;font-size:7.0px;right:475.40px;transform:scaleX(0.855);transform-origin:100% 0;">330,53</div>
<div class="t n" style="top:363.57px;font-size:7.0px;right:430.70px;transform:scaleX(0.855);transform-origin:100% 0;">419,12</div>
<div class="t n" style="top:363.57px;font-size:7.0px;right:385.90px;transform:scaleX(0.855);transform-origin:100% 0;">0,00</div>
<div class="t n" style="top:363.57px;font-size:7.0px;right:341.40px;transform:scaleX(0.855);transform-origin:100% 0;">0,00</div>
<div class="t n" style="top:363.57px;font-size:7.0px;right:296.70px;transform:scaleX(0.855);transform-origin:100% 0;">0,00</div>
<div class="t n" style="top:363.57px;font-size:7.0px;right:251.60px;transform:scaleX(0.855);transform-origin:100% 0;">0,00</div>
<div class="t n" style="top:363.57px;font-size:7.0px;right:207.10px;transform:scaleX(0.855);transform-origin:100% 0;">749,65</div>
<div class="t n" style="top:363.57px;font-size:7.0px;right:163.00px;transform:scaleX(0.855);transform-origin:100% 0;">781,12</div>
<div class="t n" style="top:363.57px;font-size:7.0px;right:118.60px;transform:scaleX(0.855);transform-origin:100% 0;">0,00</div>
<div class="t s" style="top:371.92px;font-size:6.0px;left:71.00px;transform:scaleX(0.78);transform-origin:0 0;">2.03.05.0009</div>
<div class="t s" style="top:371.99px;font-size:5.8px;left:123.10px;transform:scaleX(0.72);transform-origin:0 0;letter-spacing:0.5px;">PRODUTOS ALIMENTÍCIOS</div>
<div class="t n" style="top:374.57px;font-size:7.0px;right:519.90px;transform:scaleX(0.855);transform-origin:100% 0;">0,00</div>
<div class="t n" style="top:374.57px;font-size:7.0px;right:475.40px;transform:scaleX(0.855);transform-origin:100% 0;">330,53</div>
<div class="t n" style="top:374.57px;font-size:7.0px;right:430.70px;transform:scaleX(0.855);transform-origin:100% 0;">419,12</div>
<div class="t n" style="top:374.57px;font-size:7.0px;right:385.90px;transform:scaleX(0.855);transform-origin:100% 0;">0,00</div>
<div class="t n" style="top:374.57px;font-size:7.0px;right:341.40px;transform:scaleX(0.855);transform-origin:100% 0;">0,00</div>
<div class="t n" style="top:374.57px;font-size:7.0px;right:296.70px;transform:scaleX(0.855);transform-origin:100% 0;">0,00</div>
<div class="t n" style="top:374.57px;font-size:7.0px;right:251.60px;transform:scaleX(0.855);transform-origin:100% 0;">0,00</div>
<div class="t n" style="top:374.57px;font-size:7.0px;right:207.10px;transform:scaleX(0.855);transform-origin:100% 0;">749,65</div>
<div class="t n" style="top:374.57px;font-size:7.0px;right:163.00px;transform:scaleX(0.855);transform-origin:100% 0;">781,12</div>
<div class="t n" style="top:374.57px;font-size:7.0px;right:118.60px;transform:scaleX(0.855);transform-origin:100% 0;">0,00</div>
<div class="t b" style="top:384.61px;font-size:6.9px;left:71.00px;transform:scaleX(0.83);transform-origin:0 0;">2.03.09</div>
<div class="t b" style="top:384.61px;font-size:6.9px;left:123.10px;transform:scaleX(0.8);transform-origin:0 0;letter-spacing:0.5px;">DESPESAS FINANCEIRAS</div>
<div class="t n" style="top:384.57px;font-size:7.0px;right:519.90px;transform:scaleX(0.855);transform-origin:100% 0;">7,15</div>
<div class="t n" style="top:384.57px;font-size:7.0px;right:475.40px;transform:scaleX(0.855);transform-origin:100% 0;">0,00</div>
<div class="t n" style="top:384.57px;font-size:7.0px;right:430.70px;transform:scaleX(0.855);transform-origin:100% 0;">0,00</div>
<div class="t n" style="top:384.57px;font-size:7.0px;right:385.90px;transform:scaleX(0.855);transform-origin:100% 0;">0,00</div>
<div class="t n" style="top:384.57px;font-size:7.0px;right:341.40px;transform:scaleX(0.855);transform-origin:100% 0;">0,00</div>
<div class="t n" style="top:384.57px;font-size:7.0px;right:296.70px;transform:scaleX(0.855);transform-origin:100% 0;">0,00</div>
<div class="t n" style="top:384.57px;font-size:7.0px;right:251.60px;transform:scaleX(0.855);transform-origin:100% 0;">0,00</div>
<div class="t n" style="top:384.57px;font-size:7.0px;right:207.10px;transform:scaleX(0.855);transform-origin:100% 0;">7,15</div>
<div class="t n" style="top:384.57px;font-size:7.0px;right:163.00px;transform:scaleX(0.855);transform-origin:100% 0;">0,00</div>
<div class="t n" style="top:384.57px;font-size:7.0px;right:118.60px;transform:scaleX(0.855);transform-origin:100% 0;">0,00</div>
<div class="t s" style="top:393.92px;font-size:6.0px;left:71.00px;transform:scaleX(0.78);transform-origin:0 0;">2.03.09.0002</div>
<div class="t s" style="top:393.99px;font-size:5.8px;left:123.10px;transform:scaleX(0.72);transform-origin:0 0;letter-spacing:0.5px;">DESPESAS BANCÁRIAS</div>
<div class="t n" style="top:395.57px;font-size:7.0px;right:519.90px;transform:scaleX(0.855);transform-origin:100% 0;">7,15</div>
<div class="t n" style="top:395.57px;font-size:7.0px;right:475.40px;transform:scaleX(0.855);transform-origin:100% 0;">0,00</div>
<div class="t n" style="top:395.57px;font-size:7.0px;right:430.70px;transform:scaleX(0.855);transform-origin:100% 0;">0,00</div>
<div class="t n" style="top:395.57px;font-size:7.0px;right:385.90px;transform:scaleX(0.855);transform-origin:100% 0;">0,00</div>
<div class="t n" style="top:395.57px;font-size:7.0px;right:341.40px;transform:scaleX(0.855);transform-origin:100% 0;">0,00</div>
<div class="t n" style="top:395.57px;font-size:7.0px;right:296.70px;transform:scaleX(0.855);transform-origin:100% 0;">0,00</div>
<div class="t n" style="top:395.57px;font-size:7.0px;right:251.60px;transform:scaleX(0.855);transform-origin:100% 0;">0,00</div>
<div class="t n" style="top:395.57px;font-size:7.0px;right:207.10px;transform:scaleX(0.855);transform-origin:100% 0;">7,15</div>
<div class="t n" style="top:395.57px;font-size:7.0px;right:163.00px;transform:scaleX(0.855);transform-origin:100% 0;">0,00</div>
<div class="t n" style="top:395.57px;font-size:7.0px;right:118.60px;transform:scaleX(0.855);transform-origin:100% 0;">0,00</div>
<svg class="a" style="left:6px;top:17px" width="16" height="16" viewBox="0 0 16 16"><circle cx="8" cy="8" r="6.6" fill="none" stroke="#e4e4e4" stroke-width="1.3"/><path d="M4.2 8H13M7.2 5L4.2 8L7.2 11" fill="none" stroke="#e4e4e4" stroke-width="1.3"/></svg>
<svg class="a" style="left:25px;top:18px" width="14" height="14" viewBox="0 0 14 14"><rect x="0" y="0" width="14" height="14" fill="#fff"/><path d="M7 2.1H11.1L8.7 6.4Z M2.3 11.7H6.6L5.6 6.6Z M7.8 11.7H12.5L10.8 6.4Z" fill="#3d4551"/></svg>
<div class="a" style="left:42px;top:18px;width:1px;height:14px;background:#5c6570"></div>
<svg class="a" style="left:46px;top:17.5px" width="14" height="14" viewBox="0 0 14 14"><path d="M7 0.3L8.75 5.2L13.9 5.3L9.8 8.4L11.3 13.4L7 10.4L2.7 13.4L4.2 8.4L0.1 5.3L5.25 5.2Z" fill="#fff"/></svg>
<div class="a" style="left:64px;top:24px;width:0;height:0;border-left:1.5px solid transparent;border-right:1.5px solid transparent;border-top:1.5px solid #8a929c"></div>
<div class="a" style="left:70px;top:17px;width:71px;height:16px;background:#5291b1"></div>
<div class="t " style="top:25.15px;font-size:6.2px;color:#b2d2e0;left:78.00px;transform:scaleX(0.93);transform-origin:0 0;">Lista Negociações</div>
<div class="t " style="top:24.73px;font-size:8px;color:#3f6a80;left:133.00px;">&#215;</div>
<div class="a" style="left:141px;top:17px;width:93px;height:16px;background:#5fc2eb"></div>
<div class="t " style="top:25.15px;font-size:6.2px;color:#f4fbff;left:148.70px;transform:scaleX(0.945);transform-origin:0 0;">Visualização de Relatório</div>
<div class="t " style="top:24.73px;font-size:8px;color:#3b7a99;left:222.50px;">&#215;</div>
<svg class="a" style="left:238px;top:22.5px" width="9" height="9" viewBox="0 0 9 9"><path d="M4.5 0.5V8.5M0.5 4.5H8.5" stroke="#303a47" stroke-width="2"/></svg>
<div class="a" style="left:720px;top:2px;width:14px;height:9px;border:1px solid #56687c"></div>
<div class="a" style="left:734px;top:2px;width:14px;height:9px;border:1px solid #56687c"></div>
<div class="a" style="left:748px;top:2px;width:15px;height:9px;border:1px solid #56687c"></div>
<div class="a" style="left:724px;top:6.5px;width:5.5px;height:2px;background:#e6e6e6"></div>
<div class="a" style="left:738px;top:4.5px;width:5.5px;height:4px;background:#e6e6e6"></div>
<div class="a" style="left:739.5px;top:6.2px;width:2.5px;height:1.2px;background:#3d4551"></div>
<svg class="a" style="left:752px;top:4px" width="7" height="6" viewBox="0 0 7 6"><path d="M1 1L6 5M6 1L1 5" stroke="#e6e6e6" stroke-width="1.3"/></svg>
<div class="a" style="left:742px;top:18px;width:1px;height:14px;background:#5c6570"></div>
<svg class="a" style="left:747px;top:18px" width="14" height="14" viewBox="0 0 14 14"><g fill="#fff"><circle cx="7" cy="7" r="5.0"/><rect x="5.4" y="0.4" width="3.2" height="13.2" rx="0.9"/><rect x="5.4" y="0.4" width="3.2" height="13.2" rx="0.9" transform="rotate(60 7 7)"/><rect x="5.4" y="0.4" width="3.2" height="13.2" rx="0.9" transform="rotate(120 7 7)"/></g><circle cx="7" cy="7" r="2.7" fill="#3d4551"/></svg>
<svg class="a" style="left:10px;top:38px" width="9" height="9" viewBox="0 0 9 9"><rect x="0.6" y="0.3" width="7.6" height="8" fill="#4b4fc2"/><rect x="2" y="0.3" width="4.8" height="4.2" fill="#e4e6f4"/><rect x="2.6" y="5.8" width="3.6" height="2.5" fill="#2f3590"/><rect x="4.2" y="6.6" width="1.2" height="1.7" fill="#eef"/></svg>
<svg class="a" style="left:25px;top:37px" width="11" height="10" viewBox="0 0 11 10"><path d="M1.8 0.6L5.6 0.2L6.2 4.5L2.4 4.9Z" fill="#8cc0ee" stroke="#5b87b8" stroke-width="0.5"/><path d="M0.6 5.2L2 4.3H9.6L10.4 5.2V9.2H0.6Z" fill="#8a8a8a"/><rect x="1" y="5" width="9" height="1.6" fill="#c4c4c4"/><rect x="4.5" y="7.3" width="5" height="1" fill="#333"/><path d="M1.6 6.8L8.4 2.6" stroke="#21c021" stroke-width="2.2" fill="none"/><path d="M6.2 1L10 1.6L8.8 5Z" fill="#21c021"/></svg>
<svg class="a" style="left:38px;top:37px" width="11" height="10" viewBox="0 0 11 10"><path d="M2.2 0.6L6 0.2L6.6 4.6L2.8 5Z" fill="#8cc0ee" stroke="#5b87b8" stroke-width="0.5"/><path d="M0.6 5.2L2 4.3H9.6L10.4 5.2V9.2H0.6Z" fill="#8a8a8a"/><rect x="1" y="5" width="9" height="1.6" fill="#c8c8c8"/><rect x="4.5" y="7.3" width="5" height="1" fill="#333"/></svg>
<div class="t " style="top:42.52px;font-size:6.3px;color:#8c8c8c;left:53.30px;transform:scaleX(0.99);transform-origin:0 0;">Páginas:</div>
<div class="a" style="left:82px;top:40px;width:1.5px;height:6px;background:#2a3aa8"></div>
<div class="a" style="left:84px;top:40px;width:0;height:0;border-top:3px solid transparent;border-bottom:3px solid transparent;border-right:3.5px solid #b01818"></div>
<div class="a" style="left:96px;top:40px;width:0;height:0;border-top:3px solid transparent;border-bottom:3px solid transparent;border-right:3.5px solid #9a1818"></div>
<div class="a" style="left:108px;top:37px;width:22px;height:12px;background:#fff;border:1px solid #dcdcdc"></div>
<div class="t " style="top:43.17px;font-size:7px;color:#111;left:110.20px;">1</div>
<div class="t " style="top:43.02px;font-size:6.3px;color:#8c8c8c;left:132.40px;">de</div>
<div class="a" style="left:142px;top:37px;width:22px;height:12px;background:#fff;border:1px solid #dcdcdc"></div>
<div class="t " style="top:43.17px;font-size:7px;color:#111;left:144.20px;">1</div>
<div class="a" style="left:172.5px;top:40px;width:0;height:0;border-top:3px solid transparent;border-bottom:3px solid transparent;border-left:3.5px solid #9a1818"></div>
<div class="a" style="left:185px;top:40px;width:0;height:0;border-top:3px solid transparent;border-bottom:3px solid transparent;border-left:3.5px solid #b01818"></div>
<div class="a" style="left:188.5px;top:40px;width:1.5px;height:6px;background:#2a3aa8"></div>
<div class="t " style="top:43.02px;font-size:6.3px;color:#8c8c8c;left:196.60px;transform:scaleX(1.12);transform-origin:0 0;">Zoom:</div>
<div class="a" style="left:218px;top:37px;width:55px;height:12px;background:#fff;border:1px solid #dcdcdc"></div>
<div class="a" style="left:265px;top:38px;width:1px;height:10px;background:#e2e2e2"></div>
<div class="a" style="left:268px;top:43px;width:0;height:0;border-left:1.5px solid transparent;border-right:1.5px solid transparent;border-top:1.5px solid #777"></div>
<div class="t " style="top:43.12px;font-size:6.3px;color:#111;left:219.00px;">Para Largura</div>
<svg class="a" style="left:279px;top:39px" width="7" height="7" viewBox="0 0 7 7"><path d="M0.8 0.8L6.2 6.2M6.2 0.8L0.8 6.2" stroke="#b11d1d" stroke-width="1.5"/></svg>
<div class="t " style="top:43.02px;font-size:6.3px;color:#9a9a9a;left:289.50px;">Fechar</div>
<div class="a" style="left:314px;top:38px;width:89px;height:9px;background:#eeeeee;border-top:1px solid #c6c6c6;border-left:1px solid #e4e4e4;border-right:1px solid #e8e8e8"></div>
<div class="a" style="left:754px;top:51px;width:10px;height:10px;background:#f4f4f4;border-bottom:1px solid #c4c4c4"></div>
<div class="a" style="left:757px;top:54.5px;width:0;height:0;border-left:2.5px solid transparent;border-right:2.5px solid transparent;border-bottom:2.5px solid #111"></div>
<div class="a" style="left:754px;top:386px;width:10px;height:10px;background:#fafafa;border-top:1px solid #dedede"></div>
<div class="a" style="left:757px;top:390px;width:0;height:0;border-left:2.5px solid transparent;border-right:2.5px solid transparent;border-top:2.5px solid #111"></div>
<div class="a" style="left:0;top:396px;width:768px;height:16px;background:#3d4551"></div>
<div class="a" style="left:0;top:35px;width:4px;height:377px;background:#3d4551"></div>
<div class="a" style="left:764px;top:35px;width:4px;height:377px;background:#3d4551"></div>
<svg class="a" style="left:5px;top:397px" width="11" height="10" viewBox="0 0 11 10"><ellipse cx="5.2" cy="2.8" rx="2.3" ry="2.8" fill="#fff"/><path d="M0.5 9.5C0.8 6.8 2.5 6 4 5.8L6.4 5.8C8 6 9.6 6.8 9.9 9.5Z" fill="#fff"/></svg>
<div class="a" style="left:0;top:411px;width:768px;height:1px;background:#4f555d"></div>
<div class="t " style="top:402.12px;font-size:6.3px;color:#c9c9c9;left:16.00px;transform:scaleX(0.87);transform-origin:0 0;">DEMO</div>
</div></body></html>
